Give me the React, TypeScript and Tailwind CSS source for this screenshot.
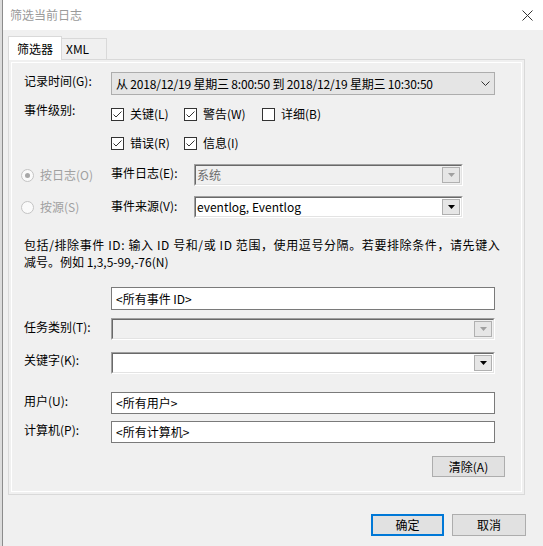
import React from "react";

function Check({ checked }: { checked: boolean }) {
  return (
    <span className="w-[13px] h-[13px] border border-[#333333] bg-white flex items-center justify-center shrink-0">
      {checked && (
        <svg width="11" height="11" viewBox="0 0 11 11">
          <path d="M1.5 5.5 L4 8 L9.5 2.5" fill="none" stroke="#333333" strokeWidth="1" />
        </svg>
      )}
    </span>
  );
}

function CheckItem({ label, checked, w }: { label: string; checked: boolean; w: string }) {
  return (
    <div className={"flex items-center gap-[6px] " + w}>
      <Check checked={checked} />
      <span>{label}</span>
    </div>
  );
}

function Radio({ on }: { on: boolean }) {
  return (
    <span className="w-[13px] h-[13px] rounded-full border border-[#c4c4c4] bg-[#fafafa] flex items-center justify-center shrink-0">
      {on && <span className="w-[5px] h-[5px] rounded-full bg-[#a8a8a8]" />}
    </span>
  );
}

function DropBtn({ disabled }: { disabled: boolean }) {
  return (
    <span className="w-[18px] h-[16px] border border-[#b0b0b0] bg-[#e6e6e6] flex items-center justify-center shrink-0">
      <svg width="7" height="4" viewBox="0 0 7 4">
        <polygon points="0,0 7,0 3.5,4" fill={disabled ? "#a0a0a0" : "#000000"} />
      </svg>
    </span>
  );
}

function SunkenCombo({ text, disabled, w }: { text?: string; disabled: boolean; w: string }) {
  return (
    <div className={"h-[22px] border border-t-[#a0a0a0] border-l-[#a0a0a0] border-r-white border-b-white " + w}>
      <div
        className={
          disabled
            ? "h-full border border-t-[#696969] border-l-[#696969] border-r-[#e3e3e3] border-b-[#e3e3e3] bg-[#f0f0f0] flex items-center pr-px"
            : "h-full border border-t-[#696969] border-l-[#696969] border-r-[#e3e3e3] border-b-[#e3e3e3] bg-white flex items-center pr-px"
        }
      >
        <span className={disabled ? "flex-1 pl-px text-[#6d6d6d]" : "flex-1 pl-px"}>{text}</span>
        <DropBtn disabled={disabled} />
      </div>
    </div>
  );
}

function TextInput({ text }: { text: string }) {
  return (
    <div className="w-[384px] h-[22px] border border-[#7a7a7a] bg-white flex items-center pl-[4px]">
      {text}
    </div>
  );
}

export default function App() {
  return (
    <div className="w-[543px] h-[546px] flex font-['Noto_Sans_CJK_SC',sans-serif] text-[12px] text-black overflow-hidden">
      <div className="w-[2px] bg-[#dcdcdc]" />
      <div className="w-px bg-[#8c8c8c]" />
      <div className="flex-1 flex flex-col bg-[#f0f0f0]">
        {/* title bar */}
        <div className="h-[30px] bg-white flex items-center justify-between pl-[7px] pr-[10px]">
          <span className="text-[#9a9a9a]">筛选当前日志</span>
          <svg width="11" height="11" viewBox="0 0 11 11">
            <path d="M0.5 0.5 L10.5 10.5 M10.5 0.5 L0.5 10.5" stroke="#333333" strokeWidth="1" />
          </svg>
        </div>

        <div className="pl-[5px] pt-[6px]">
          {/* tabs */}
          <div className="flex items-end h-[23px]">
            <div className="relative z-10 h-[24px] w-[54px] -mb-px border border-b-0 border-[#d9d9d9] bg-white flex items-center justify-center">
              筛选器
            </div>
            <div className="h-[21px] w-[45px] border border-l-0 border-b-0 border-[#d9d9d9] flex items-center pl-[4px]">
              XML
            </div>
          </div>

          {/* panel */}
          <div className="w-[517px] h-[436px] border border-[#d9d9d9] p-[2px]">
            <div className="h-full border border-white pl-[12px] pr-[26px] pt-[9px] flex flex-col">
              {/* time */}
              <div className="flex items-center">
                <div className="w-[87px] mb-[5px]">记录时间(G):</div>
                <div className="w-[384px] h-[23px] border border-[#adadad] bg-[#e5e5e5] flex items-center pl-[4px] pr-[4px]">
                  <span className="flex-1 tracking-[-0.2px]">从 2018/12/19 星期三 8:00:50 到 2018/12/19 星期三 10:30:50</span>
                  <svg width="9" height="5" viewBox="0 0 9 5">
                    <path d="M0.5 0.5 L4.5 4.5 L8.5 0.5" fill="none" stroke="#333333" strokeWidth="1" />
                  </svg>
                </div>
              </div>

              {/* levels */}
              <div className="flex mt-[9px]">
                <div className="w-[87px] h-[20px] -mt-[4px] flex items-center">事件级别:</div>
                <div className="flex flex-col gap-[9px]">
                  <div className="flex h-[20px] items-center">
                    <CheckItem label="关键(L)" checked w="w-[73px]" />
                    <CheckItem label="警告(W)" checked w="w-[78px]" />
                    <CheckItem label="详细(B)" checked={false} w="w-[80px]" />
                  </div>
                  <div className="flex h-[20px] items-center">
                    <CheckItem label="错误(R)" checked w="w-[73px]" />
                    <CheckItem label="信息(I)" checked w="w-[78px]" />
                  </div>
                </div>
              </div>

              {/* by log */}
              <div className="flex items-center mt-[11px]">
                <div className="w-[90px] -ml-[3px] flex items-center gap-[6px] text-[#a0a0a0]">
                  <Radio on />
                  <span>按日志(O)</span>
                </div>
                <div className="w-[83px] mb-[4px]">事件日志(E):</div>
                <SunkenCombo text="系统" disabled w="w-[269px]" />
              </div>

              {/* by source */}
              <div className="flex items-center mt-[10px]">
                <div className="w-[90px] -ml-[3px] flex items-center gap-[6px] text-[#a0a0a0]">
                  <Radio on={false} />
                  <span>按源(S)</span>
                </div>
                <div className="w-[83px] mb-[2px]">事件来源(V):</div>
                <SunkenCombo text="eventlog, Eventlog" disabled={false} w="w-[269px]" />
              </div>

              {/* description */}
              <div className="mt-[18px] leading-[17px] -mr-[20px]">
                <span className="tracking-[0.6px] whitespace-nowrap">
                  包括/排除事件 ID: 输入 ID 号和/或 ID 范围，使用逗号分隔。若要排除条件，请先键入
                </span>
                <br />
                减号。例如 1,3,5-99,-76(N)
              </div>

              <div className="flex items-center mt-[17px]">
                <div className="w-[87px]" />
                <div className="w-[384px] h-[23px] border border-[#7a7a7a] bg-white flex items-center pl-[4px]">
                  {"<所有事件 ID>"}
                </div>
              </div>

              <div className="flex items-center mt-[8px]">
                <div className="w-[87px] mb-[4px]">任务类别(T):</div>
                <SunkenCombo disabled w="w-[384px]" />
              </div>

              <div className="flex items-center mt-[11px]">
                <div className="w-[87px] mb-[5px]">关键字(K):</div>
                <SunkenCombo disabled={false} w="w-[384px]" />
              </div>

              <div className="flex items-center mt-[18px]">
                <div className="w-[87px] mb-[4px]">用户(U):</div>
                <TextInput text={"<所有用户>"} />
              </div>

              <div className="flex items-center mt-[7px]">
                <div className="w-[87px] mb-[4px]">计算机(P):</div>
                <TextInput text={"<所有计算机>"} />
              </div>

              <div className="flex justify-end mt-[13px] -mr-[10px]">
                <div className="w-[73px] h-[21px] border border-[#adadad] bg-[#e1e1e1] flex items-center justify-center">
                  清除(A)
                </div>
              </div>
            </div>
          </div>
        </div>

        {/* bottom buttons */}
        <div className="flex justify-end gap-[8px] pr-[17px] mt-[19px]">
          <div className="w-[73px] h-[22px] border-2 border-[#0078d7] bg-[#e1e1e1] flex items-center justify-center">
            确定
          </div>
          <div className="w-[74px] h-[22px] border border-[#adadad] bg-[#e1e1e1] flex items-center justify-center">
            取消
          </div>
        </div>
      </div>
    </div>
  );
}
